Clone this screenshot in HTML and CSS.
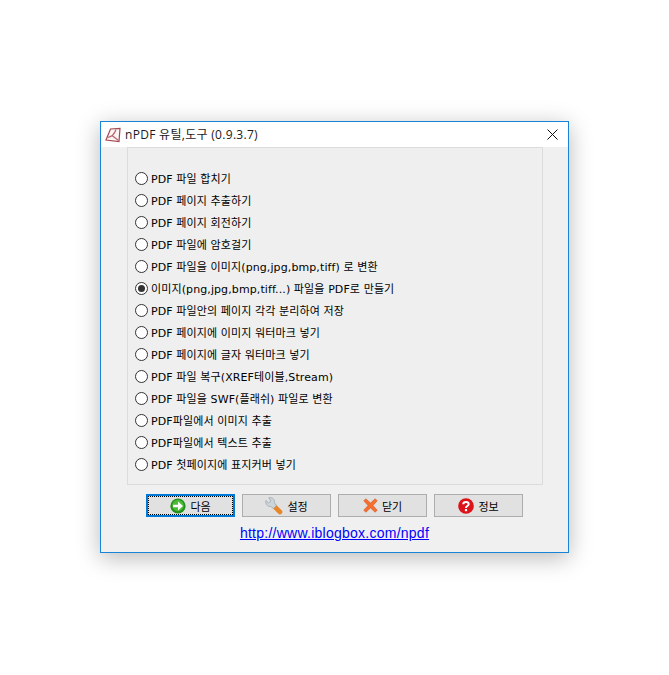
FILE: index.html
```html
<!DOCTYPE html>
<html lang="ko">
<head>
    <meta charset="UTF-8">
    <title>nPDF 유틸,도구</title>
    <link rel="stylesheet" href="styles.css">
</head>
<body>
    <div class="window">
        <div class="titlebar">
            <svg class="app-icon" width="16" height="16" viewBox="0 0 16 16">
                <path d="M1 13 L5.5 2 L15 1.5 L14 14.5 Z" fill="#fdf4f4" stroke="#a34a52" stroke-width="1.2"/>
                <path d="M2.5 10.5 C6 10 9 8.5 11 2.5 M7 8.5 L13.5 13.5" fill="none" stroke="#b5646c" stroke-width="1.2"/>
            </svg>
            <span class="title">nPDF 유틸,도구 (0.9.3.7)</span>
            <svg class="close-icon" width="11" height="11" viewBox="0 0 11 11">
                <path d="M0.5 0.5 L10.5 10.5 M10.5 0.5 L0.5 10.5" stroke="#111" stroke-width="1" fill="none"/>
            </svg>
        </div>
        <div class="content">
            <div class="panel">
                <label class="option"><span class="radio"></span>PDF 파일 합치기</label>
                <label class="option"><span class="radio"></span>PDF 페이지 추출하기</label>
                <label class="option"><span class="radio"></span>PDF 페이지 회전하기</label>
                <label class="option"><span class="radio"></span>PDF 파일에 암호걸기</label>
                <label class="option"><span class="radio"></span>PDF 파일을 이미지(png,jpg,bmp,tiff) 로 변환</label>
                <label class="option"><span class="radio checked"></span>이미지(png,jpg,bmp,tiff...) 파일을 PDF로 만들기</label>
                <label class="option"><span class="radio"></span>PDF 파일안의 페이지 각각 분리하여 저장</label>
                <label class="option"><span class="radio"></span>PDF 페이지에 이미지 워터마크 넣기</label>
                <label class="option"><span class="radio"></span>PDF 페이지에 글자 워터마크 넣기</label>
                <label class="option"><span class="radio"></span>PDF 파일 복구(XREF테이블,Stream)</label>
                <label class="option"><span class="radio"></span>PDF 파일을 SWF(플래쉬) 파일로 변환</label>
                <label class="option"><span class="radio"></span>PDF파일에서 이미지 추출</label>
                <label class="option"><span class="radio"></span>PDF파일에서 텍스트 추출</label>
                <label class="option"><span class="radio"></span>PDF 첫페이지에 표지커버 넣기</label>
            </div>
            <div class="buttons">
                <button class="btn btn-default">
                    <svg width="16" height="16" viewBox="0 0 16 16">
                        <circle cx="8" cy="8" r="7.6" fill="#23911a"/>
                        <circle cx="8" cy="7.5" r="5.8" fill="#4dbb35"/>
                        <path d="M3 6.8 H8 V3.6 L13 8 L8 12.4 V9.2 H3 Z" fill="#ffffff"/>
                    </svg>
                    <span>다음</span>
                </button>
                <button class="btn">
                    <svg width="18" height="18" viewBox="0 0 18 18">
                        <path d="M9.5 9.5 L15 15" stroke="#e8872a" stroke-width="4.6" stroke-linecap="round"/>
                        <path d="M0.8 3.5 L3.5 5.8 L6 4 L3.8 0.8 C7.5 0 10 2.5 9.5 6 L11.5 8.5 L8.5 11.5 L5.8 9.5 C2.5 10 0.3 7 0.8 3.5 Z" fill="#ccd5da" stroke="#98a3aa" stroke-width="0.7"/>
                    </svg>
                    <span>설정</span>
                </button>
                <button class="btn">
                    <svg width="15" height="15" viewBox="0 0 15 15">
                        <path d="M0.8 2.8 L2.8 0.8 L7.5 5 L12.2 0.8 L14.2 2.8 L10 7.5 L14.2 12.2 L12.2 14.2 L7.5 10 L2.8 14.2 L0.8 12.2 L5 7.5 Z" fill="#f3702f" stroke="#dc5620" stroke-width="0.6"/>
                    </svg>
                    <span>닫기</span>
                </button>
                <button class="btn">
                    <svg width="16" height="16" viewBox="0 0 16 16">
                        <circle cx="8" cy="8" r="7.8" fill="#dc1419"/>
                        <path d="M5.3 6.2 C5.3 3.4 10.7 3.4 10.7 6.2 C10.7 8 8 8 8 9.9" fill="none" stroke="#ffffff" stroke-width="2"/>
                        <rect x="6.9" y="11" width="2.2" height="2.2" fill="#ffffff"/>
                    </svg>
                    <span>정보</span>
                </button>
            </div>
            <a class="link" href="#">http://www.iblogbox.com/npdf</a>
        </div>
    </div>
</body>
</html>
```

FILE: styles.css
```css
body {
    margin: 0;
    background-color: #ffffff;
    font-family: "DejaVu Sans", "Noto Sans CJK KR", sans-serif;
    height: 675px;
    overflow: hidden;
}

.window {
    box-sizing: border-box;
    width: 469px;
    height: 432px;
    margin: 121px 0 0 100px;
    border: 1px solid #1883d7;
    background-color: #f0f0f0;
    box-shadow: 0 5px 22px rgba(0, 0, 0, 0.28);
}

.titlebar {
    display: flex;
    align-items: center;
    height: 25px;
    padding: 0 10px 0 4px;
    background-color: #ffffff;
}

.app-icon {
    margin-right: 4px;
}

.title {
    flex: 1;
    margin-top: -2px;
    font-family: "Open Sans", "Noto Sans CJK KR", sans-serif;
    font-size: 12px;
    letter-spacing: 0.3px;
    color: #1a1a1a;
}

.content {
    display: flex;
    flex-direction: column;
    align-items: flex-start;
    padding-left: 26px;
}

.panel {
    box-sizing: border-box;
    width: 416px;
    height: 338px;
    padding-top: 19px;
    border: 1px solid #dcdcdc;
    background-color: #efefef;
}

.option {
    display: flex;
    align-items: center;
    height: 22px;
    padding-left: 7px;
    font-size: 11px;
    letter-spacing: 0.1px;
    color: #000000;
}

.radio {
    box-sizing: border-box;
    display: flex;
    align-items: center;
    justify-content: center;
    width: 13px;
    height: 13px;
    margin-right: 3px;
    border: 1px solid #333333;
    border-radius: 50%;
    background-color: #ffffff;
}

.radio.checked::after {
    content: '';
    width: 7px;
    height: 7px;
    border-radius: 50%;
    background-color: #333333;
}

.buttons {
    display: flex;
    gap: 7px;
    margin: 9px 0 0 19px;
}

.btn {
    box-sizing: border-box;
    display: flex;
    align-items: center;
    justify-content: center;
    gap: 4px;
    width: 89px;
    height: 23px;
    padding: 0;
    border: 1px solid #adadad;
    background-color: #e1e1e1;
    font-family: inherit;
    font-size: 11px;
    color: #000000;
}

.btn-default {
    border: 2px solid #0078d7;
    outline: 1px dotted #000000;
    outline-offset: -3px;
}

.link {
    align-self: center;
    margin: 8px 0 0 -26px;
    font-family: "Liberation Sans", sans-serif;
    font-size: 14px;
    letter-spacing: 0.25px;
    line-height: 16px;
    color: #0000ff;
}
```
